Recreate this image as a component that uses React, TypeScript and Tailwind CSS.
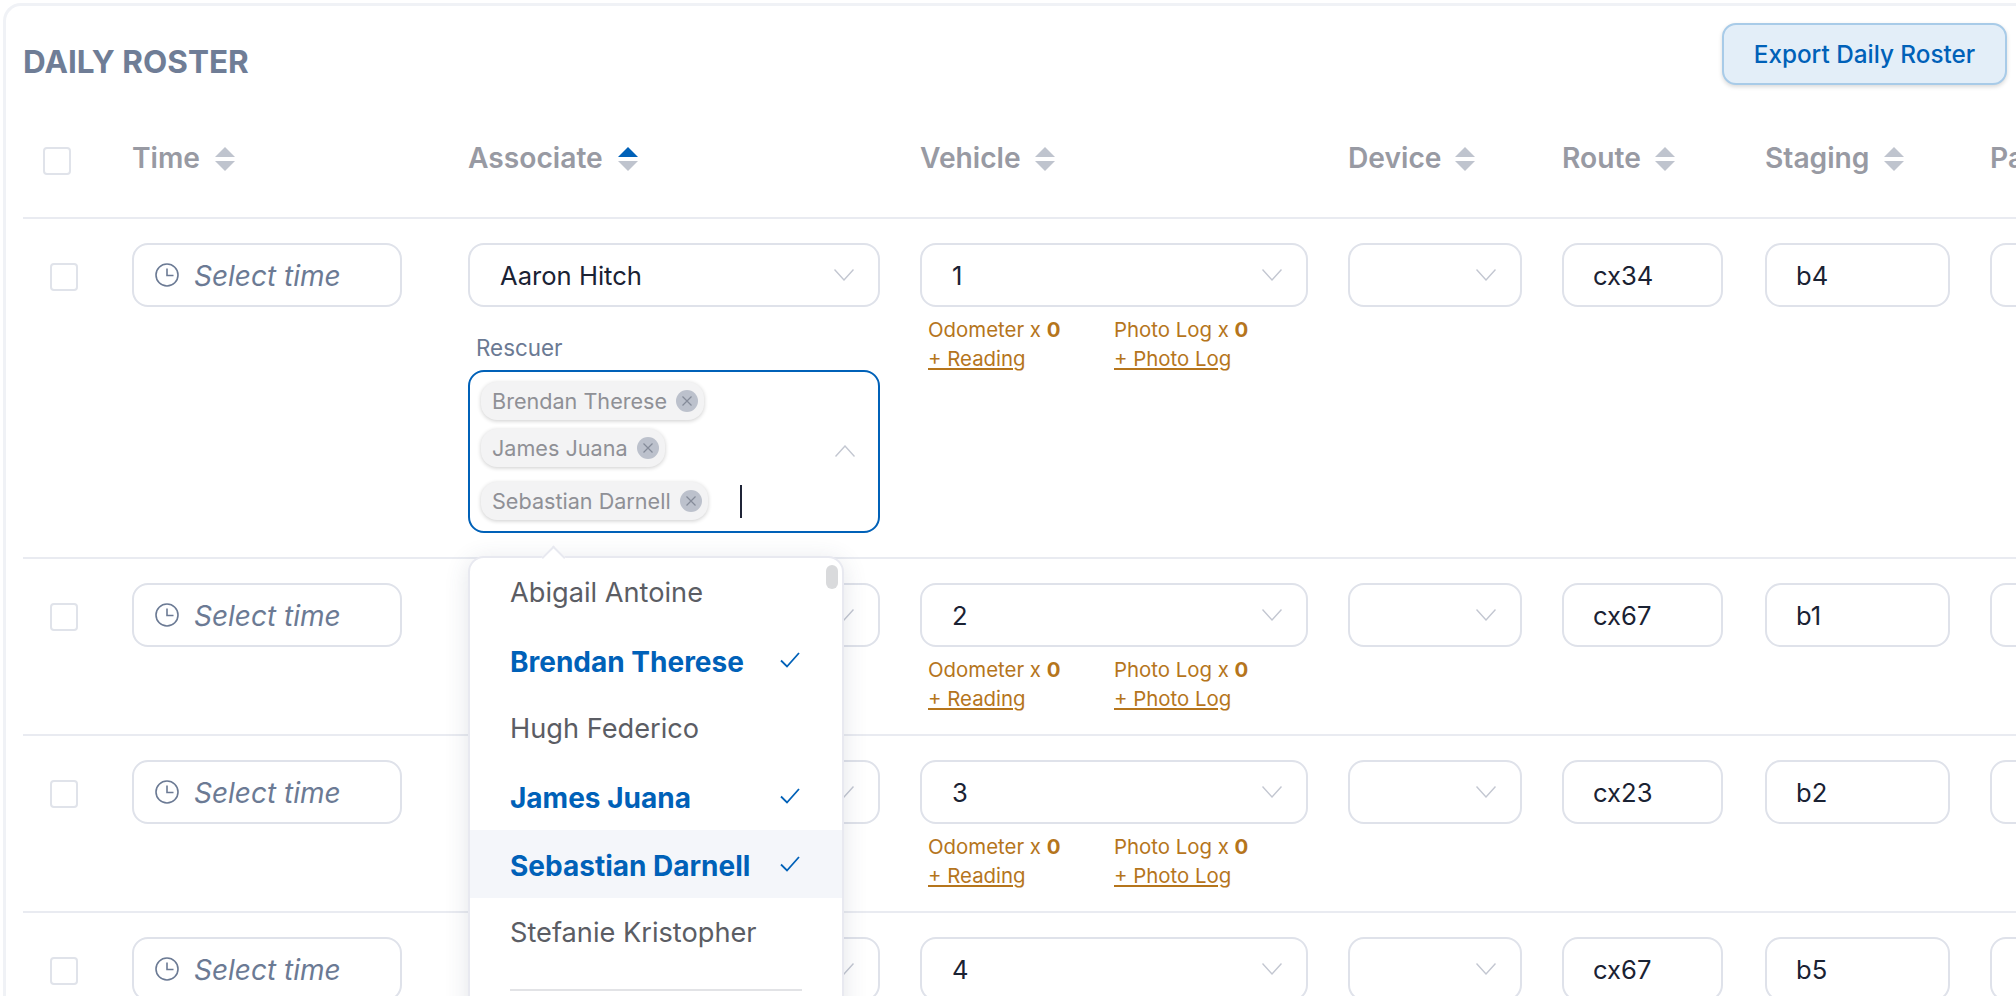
const Chevron = ({ up = false }: { up?: boolean }) => (
  <svg width="20" height="12" viewBox="0 0 20 12" fill="none" className="block">
    <path d={up ? "M0.5 11.5L10 1l9.5 10.5" : "M0.5 0.5L10 11l9.5-10.5"} stroke="#c3c7d1" strokeWidth="1.4" />
  </svg>
);

const SortIcon = ({ active = false }: { active?: boolean }) => (
  <svg width="20" height="24" viewBox="0 0 20 24" className="block">
    <path d="M10 0l10 10H0z" fill={active ? "#0061b8" : "#bfc4ce"} />
    <path d="M10 24L0 14h20z" fill="#bfc4ce" />
  </svg>
);

const ClockIcon = () => (
  <svg width="24" height="24" viewBox="0 0 24 24" fill="none" stroke="#6b7a94" strokeWidth="1.6" className="shrink-0">
    <circle cx="12" cy="12" r="11" />
    <path d="M12 5.5V12.5h6.5" />
  </svg>
);

const CheckIcon = () => (
  <svg width="20" height="16" viewBox="0 0 20 16" fill="none" stroke="#0061b8" strokeWidth="1.8" className="block">
    <path d="M1 8.5l6 6L19 1" />
  </svg>
);

const Checkbox = ({ className }: { className: string }) => (
  <div className={`w-[28px] h-[28px] rounded-[4px] border-2 border-[#e0e3ea] bg-white ${className}`} />
);

const HeaderCell = ({ label, active, gap }: { label: string; active?: boolean; gap: string }) => (
  <div className={`flex items-center ${gap} text-[28.2px] font-semibold text-[#989aa3]`}>
    <span className="-mt-[2px]">{label}</span>
    <SortIcon active={active} />
  </div>
);

const SelectBox = ({ value }: { value?: string }) => (
  <div className="h-[64px] rounded-[16px] border-2 border-[#dfe2ea] bg-white pl-[30px] pr-[24px] flex items-center justify-between text-[25.6px] text-[#1a2233]">
    <span className="pt-[2px]">{value}</span>
    <Chevron />
  </div>
);

const TextBox = ({ value }: { value?: string }) => (
  <div className="h-[64px] rounded-[16px] border-2 border-[#dfe2ea] bg-white pl-[29px] pt-[2px] flex items-center text-[25.6px] text-[#1a2233]">
    {value}
  </div>
);

const Chip = ({ name, className = "" }: { name: string; className?: string }) => (
  <div className={`inline-flex items-center h-[38px] w-fit rounded-[16px] bg-[#f3f3f4] pl-[11px] pr-[6px] gap-[9px] shadow-[0_1px_4px_rgba(0,0,0,0.2)] text-[21.6px] text-[#8f9096] ${className}`}>
    <span>{name}</span>
    <span className="w-[22px] h-[22px] rounded-full bg-[#bcc1cc] flex items-center justify-center">
      <svg width="10" height="10" viewBox="0 0 10 10" stroke="#858b99" strokeWidth="1.2">
        <path d="M0.5 0.5l9 9M9.5 0.5l-9 9" />
      </svg>
    </span>
  </div>
);

const options = [
  { name: "Abigail Antoine", selected: false },
  { name: "Brendan Therese", selected: true },
  { name: "Hugh Federico", selected: false },
  { name: "James Juana", selected: true },
  { name: "Sebastian Darnell", selected: true, hover: true },
  { name: "Stefanie Kristopher", selected: false },
];

const RescuerDropdown = () => (
  <div className="absolute -left-[2px] top-[calc(100%+25px)] w-[376px] h-[470px] z-20 rounded-t-[16px] border-2 border-[#e8e9f0] bg-white shadow-[0_4px_24px_rgba(60,70,100,0.14)]">
    <div className="absolute -top-[9px] left-[75px] w-[17px] h-[17px] rotate-45 bg-white border-l-2 border-t-2 border-[#e8e9f0]" />
    <div className="absolute right-[4px] top-[7px] w-[12px] h-[24px] rounded-full bg-[#d9dadc]" />
    <div className="relative">
      {options.map((o) => (
        <div
          key={o.name}
          className={`h-[68px] pl-[40px] pr-[42px] flex items-center justify-between ${
            o.hover ? "bg-[#f4f6fa]" : ""
          } ${o.selected ? "text-[28px] font-bold text-[#0061b8]" : "text-[27.2px] text-[#5b5d64]"}`}
        >
          <span className="pt-[3px]">{o.name}</span>
          {o.selected && <CheckIcon />}
        </div>
      ))}
      <div className="mx-[40px] mt-[23px] border-t-2 border-[#e2e3e6]" />
    </div>
  </div>
);

const OrangeLinks = () => (
  <div className="mt-[8px] pl-[8px] grid grid-cols-[186px_1fr] text-[20.4px] leading-[29px] text-[#b5751c]">
    <span>
      Odometer x <b>0</b>
    </span>
    <span>
      Photo Log x <b>0</b>
    </span>
    <span className="underline">+ Reading</span>
    <span className="underline">+ Photo Log</span>
  </div>
);

const rowCols = "grid grid-cols-[109px_336px_452px_428px_214px_203px_225px_300px]";

const rows = [
  { vehicle: "1", route: "cx34", staging: "b4" },
  { vehicle: "2", route: "cx67", staging: "b1" },
  { vehicle: "3", route: "cx23", staging: "b2" },
  { vehicle: "4", route: "cx67", staging: "b5" },
];

export default function App() {
  return (
    <div className="h-[996px] w-[2016px] overflow-hidden bg-white font-[Inter,sans-serif] antialiased">
      <div className="ml-[3px] mt-[3px] w-[2100px] h-[1100px] pl-[17px] pt-[17px] rounded-tl-[18px] border-l-[3px] border-t-[3px] border-[#f0f2f6]">
        <div className="w-[1984px] h-[72px] flex justify-between">
          <h1 className="pt-[11px] text-[31.5px] leading-[56px] font-bold text-[#6f7d96]">DAILY ROSTER</h1>
          <button
            type="button"
            className="w-[285px] h-[62px] rounded-[14px] border-2 border-[#a8cbe8] bg-[#e3eef8] text-[24.3px] font-medium text-[#0061b8] shadow-[0_2px_4px_rgba(0,0,0,0.15)]"
          >
            Export Daily Roster
          </button>
        </div>

        <div className={`${rowCols} box-content h-[116px] pt-[6px] items-center border-b-2 border-[#e9ebf1] w-[2100px]`}>
          <Checkbox className="ml-[20px] mt-[3px]" />
          <HeaderCell label="Time" gap="gap-[15px]" />
          <HeaderCell label="Associate" active gap="gap-[15px]" />
          <HeaderCell label="Vehicle" gap="gap-[14px]" />
          <HeaderCell label="Device" gap="gap-[13px]" />
          <HeaderCell label="Route" gap="gap-[14px]" />
          <HeaderCell label="Staging" gap="gap-[14px]" />
          <HeaderCell label="Parcels" gap="gap-[14px]" />
        </div>

        {rows.map((r, i) => (
          <div key={r.vehicle} className={`${rowCols} pt-[24px] border-b-2 border-[#e9ebf1] ${i === 0 ? "h-[340px]" : "h-[177px]"}`}>
            <Checkbox className="ml-[27px] mt-[20px]" />
            <div className="pr-[66px]">
              <div className="h-[64px] rounded-[16px] border-2 border-[#dfe2ea] bg-white pl-[21px] flex items-center gap-[15px] text-[28px] italic text-[#6b7a94]">
                <ClockIcon />
                <span className="pt-[2px]">Select time</span>
              </div>
            </div>
            <div className="pr-[40px]">
              <SelectBox value={i === 0 ? "Aaron Hitch" : undefined} />
              {i === 0 && (
                <>
                  <div className="mt-[26px] ml-[8px] text-[22.4px] leading-[30px] text-[#6b7a94]">Rescuer</div>
                  <div className="relative mt-[7px] h-[163px] rounded-[16px] border-2 border-[#0061b8] bg-white pl-[11px] pt-[10px]">
                    <Chip name="Brendan Therese" />
                    <Chip name="James Juana" className="flex mt-[9px]" />
                    <div className="flex items-center mt-[15px] gap-[32px]">
                      <Chip name="Sebastian Darnell" />
                      <span className="w-[2px] h-[33px] bg-[#1f2437]" />
                    </div>
                    <div className="absolute right-[23px] top-[73px]">
                      <Chevron up />
                    </div>
                    <RescuerDropdown />
                  </div>
                </>
              )}
            </div>
            <div className="pr-[40px]">
              <SelectBox value={r.vehicle} />
              {i < 3 && <OrangeLinks />}
            </div>
            <div className="pr-[40px]">
              <SelectBox />
            </div>
            <div className="pr-[42px]">
              <TextBox value={r.route} />
            </div>
            <div className="pr-[40px]">
              <TextBox value={r.staging} />
            </div>
            <div className="pr-[40px]">
              <TextBox />
            </div>
          </div>
        ))}
      </div>
    </div>
  );
}
